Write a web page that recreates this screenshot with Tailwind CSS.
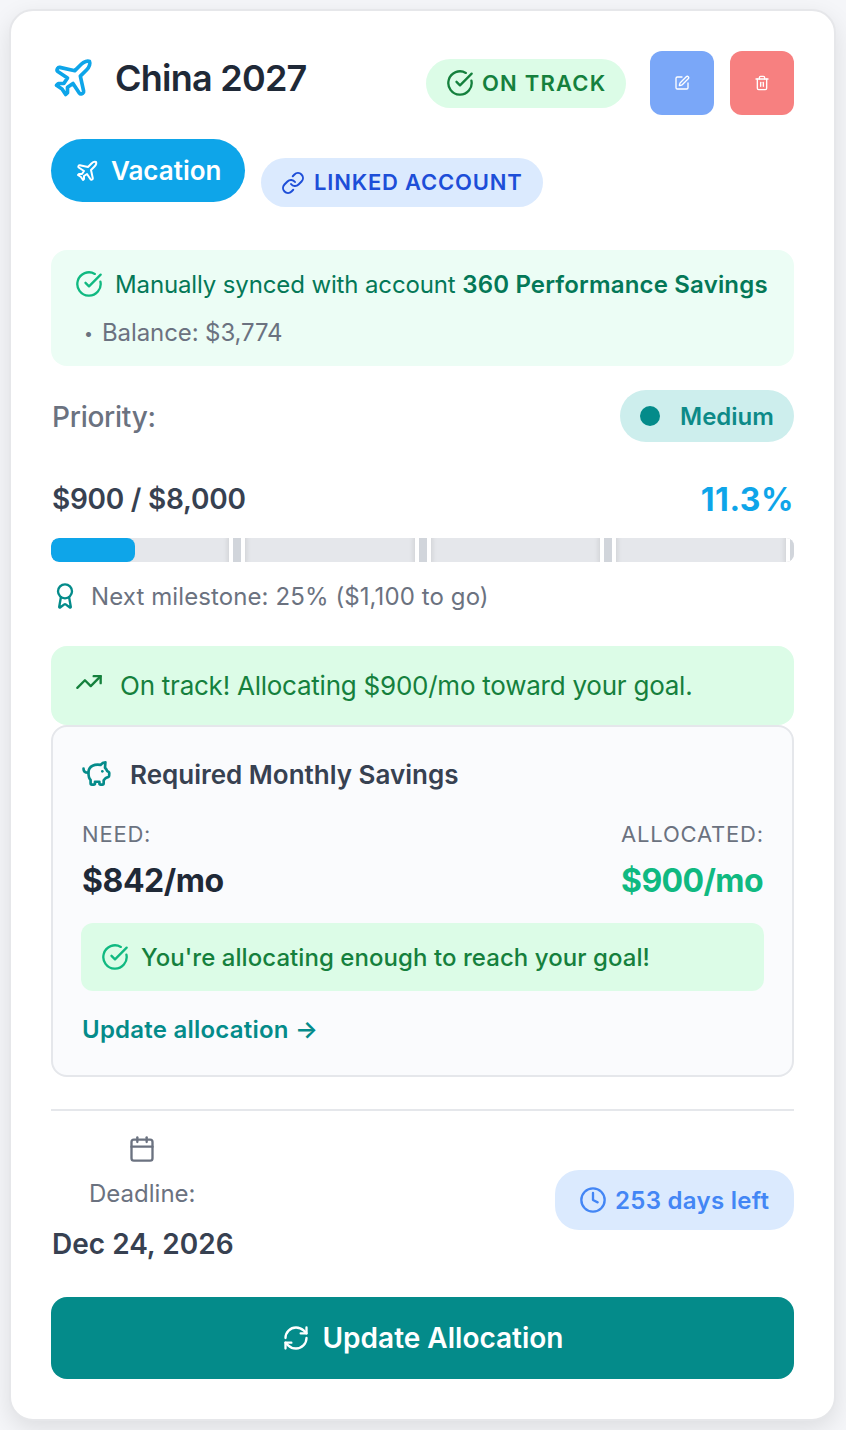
<!DOCTYPE html>
<html lang="en">
<head>
    <meta charset="UTF-8">
    <meta name="viewport" content="width=device-width, initial-scale=1.0">
    <title>Savings Goal</title>
    <script src="https://cdn.jsdelivr.net/npm/@tailwindcss/browser@4"></script>
</head>
<body class="bg-[#f5f6f9] h-[1430px] overflow-hidden p-[9px] font-['Inter','Liberation_Sans',sans-serif] whitespace-nowrap">

<svg class="hidden">
    <symbol id="plane" viewBox="0 0 24 24"><path d="M17.8 19.2 16 11l3.5-3.5C21 6 21.5 4 21 3c-1-.5-3 0-4.5 1.5L13 8 4.8 6.2c-.5-.1-.9.1-1.1.5l-.3.5c-.2.5-.1 1 .3 1.3L9 12l-2 3H4l-1 1 3 2 2 3 1-1v-3l3-2 3.5 5.3c.3.4.8.5 1.3.3l.5-.2c.4-.3.6-.7.5-1.2z"/></symbol>
    <symbol id="check" viewBox="0 0 24 24"><path d="M21.801 10A10 10 0 1 1 17 3.335"/><path d="m9 11 3 3L22 4"/></symbol>
</svg>

<div class="w-[827px] h-[1412px] bg-white rounded-3xl border-2 border-[#e6e7ea] p-10 shadow-[0_8px_24px_rgba(0,0,0,0.1)]">
    <!-- header -->
    <div class="flex h-16">
        <svg class="size-11 mt-[5px] shrink-0 text-[#0ea5e9]" fill="none" stroke="currentColor" stroke-width="2" stroke-linecap="round" stroke-linejoin="round"><use href="#plane"/></svg>
        <h2 class="ml-5 mt-1 text-[36px] leading-[46px] font-semibold text-[#1f2937] tracking-[-0.75px]">China 2027</h2>
        <div class="ml-auto mt-2 h-[49px] w-[200px] pl-5 flex items-center gap-2 rounded-full bg-[#dcfce7] text-[#15803d]">
            <svg class="size-7 -mt-0.5 shrink-0" fill="none" stroke="currentColor" stroke-width="2" stroke-linecap="round" stroke-linejoin="round"><use href="#check"/></svg>
            <span class="text-[22px] font-semibold tracking-[1.2px]">ON TRACK</span>
        </div>
        <button class="ml-6 size-16 rounded-xl bg-[#7aa7f8] text-white flex items-center justify-center">
            <svg class="size-4" viewBox="0 0 24 24" fill="none" stroke="currentColor" stroke-width="2" stroke-linecap="round" stroke-linejoin="round"><path d="M12 3H5a2 2 0 0 0-2 2v14a2 2 0 0 0 2 2h14a2 2 0 0 0 2-2v-7"/><path d="M18.375 2.625a1 1 0 0 1 3 3l-9.013 9.014a2 2 0 0 1-.853.505l-2.873.84a.5.5 0 0 1-.62-.62l.84-2.873a2 2 0 0 1 .506-.852z"/></svg>
        </button>
        <button class="ml-4 size-16 rounded-xl bg-[#f78080] text-white flex items-center justify-center">
            <svg class="size-4" viewBox="0 0 24 24" fill="none" stroke="currentColor" stroke-width="2" stroke-linecap="round" stroke-linejoin="round"><path d="M3 6h18"/><path d="M19 6v14c0 1-1 2-2 2H7c-1 0-2-1-2-2V6"/><path d="M8 6V4c0-1 1-2 2-2h4c1 0 2 1 2 2v2"/><path d="M10 11v6"/><path d="M14 11v6"/></svg>
        </button>
    </div>

    <!-- tags -->
    <div class="mt-6 h-[68px] flex gap-4">
        <div class="h-[63px] w-[194px] pl-6 flex items-center gap-3 rounded-full bg-[#0ea5e9] text-white">
            <svg class="size-6 shrink-0" fill="none" stroke="currentColor" stroke-width="2" stroke-linecap="round" stroke-linejoin="round"><use href="#plane"/></svg>
            <span class="text-[26px] font-semibold">Vacation</span>
        </div>
        <div class="mt-[19px] h-[49px] w-[282px] pl-5 flex items-center gap-[9px] rounded-full bg-[#dbeafe] text-[#1d4ed8]">
            <svg class="size-6 shrink-0" viewBox="0 0 24 24" fill="none" stroke="currentColor" stroke-width="2" stroke-linecap="round" stroke-linejoin="round"><path d="M10 13a5 5 0 0 0 7.54.54l3-3a5 5 0 0 0-7.07-7.07l-1.72 1.71"/><path d="M14 11a5 5 0 0 0-7.54-.54l-3 3a5 5 0 0 0 7.07 7.07l1.71-1.71"/></svg>
            <span class="text-[22px] font-semibold tracking-[0.8px]">LINKED ACCOUNT</span>
        </div>
    </div>

    <!-- linked account -->
    <div class="mt-[43px] h-[116px] rounded-2xl bg-[#ecfdf5] px-6 pt-[15px] text-2xl leading-10">
        <div class="flex items-center gap-3 text-[#047857]">
            <svg class="size-7 -mt-0.5 shrink-0 text-[#10b981]" fill="none" stroke="currentColor" stroke-width="2" stroke-linecap="round" stroke-linejoin="round"><use href="#check"/></svg>
            <span class="tracking-[-0.13px]">Manually synced with account <b class="font-semibold tracking-[0.17px]">360 Performance Savings</b></span>
        </div>
        <div class="mt-2 ml-[9px] flex gap-[9px] text-[#6b7280]"><span class="text-base leading-10">•</span><span class="tracking-[-0.1px]">Balance: $3,774</span></div>
    </div>

    <!-- priority -->
    <div class="mt-6 h-[52px] flex items-center justify-between">
        <span class="ml-px mt-px text-[28px] font-medium tracking-[-0.25px] text-[#6b7280]">Priority:</span>
        <div class="h-[52px] w-[174px] pl-5 flex items-center gap-5 rounded-full bg-[#cdeeed] text-[#0d8a88]">
            <i class="size-5 rounded-full bg-[#048b8a]"></i>
            <span class="mt-0.5 text-2xl font-semibold">Medium</span>
        </div>
    </div>

    <!-- progress -->
    <div class="mt-9 h-[42px] flex items-center justify-between">
        <span class="ml-px text-[28px] font-semibold tracking-[-0.25px] text-[#374151]">$900 / $8,000</span>
        <span class="mt-0.5 text-[32px] font-bold tracking-[0.5px] text-[#0ea5e9]">11.3%</span>
    </div>
    <div class="relative mt-[18px] h-6 rounded-lg bg-[#e5e7eb] overflow-hidden">
        <div class="h-6 rounded-lg bg-[#0ea5e9]" style="width: 11.3%"></div>
        <i class="absolute top-0 h-6 w-2 -ml-1 left-1/4 bg-[#d1d5db] shadow-[0_0_0_4px_white,0_0_6px_4px_rgba(0,0,0,0.14)]"></i>
        <i class="absolute top-0 h-6 w-2 -ml-1 left-2/4 bg-[#d1d5db] shadow-[0_0_0_4px_white,0_0_6px_4px_rgba(0,0,0,0.14)]"></i>
        <i class="absolute top-0 h-6 w-2 -ml-1 left-3/4 bg-[#d1d5db] shadow-[0_0_0_4px_white,0_0_6px_4px_rgba(0,0,0,0.14)]"></i>
        <i class="absolute top-0 h-6 w-2 -ml-1 left-full bg-[#d1d5db] shadow-[0_0_0_4px_white,0_0_6px_4px_rgba(0,0,0,0.14)]"></i>
    </div>
    <div class="mt-4 h-9 flex items-center gap-3 text-2xl text-[#6b7280]">
        <svg class="size-7 shrink-0 text-[#048b8a]" viewBox="0 0 24 24" fill="none" stroke="currentColor" stroke-width="2" stroke-linecap="round" stroke-linejoin="round"><path d="m15.477 12.89 1.515 8.526a.5.5 0 0 1-.81.47l-3.58-2.687a1 1 0 0 0-1.197 0l-3.586 2.686a.5.5 0 0 1-.81-.469l1.514-8.526"/><circle cx="12" cy="8" r="6"/></svg>
        <span class="mt-0.5 tracking-[0.1px]">Next milestone: 25% ($1,100 to go)</span>
    </div>

    <!-- status -->
    <div class="mt-8 h-[79px] px-6 flex items-center gap-[17px] rounded-2xl bg-[#dcfce7] text-[#15803d] text-[26px]">
        <svg class="size-7 -mt-2 shrink-0" viewBox="0 0 24 24" fill="none" stroke="currentColor" stroke-width="2" stroke-linecap="round" stroke-linejoin="round"><path d="M16 7h6v6"/><path d="m22 7-8.5 8.5-5-5L2 17"/></svg>
        <span class="tracking-[-0.24px]">On track! Allocating $900/mo toward your goal.</span>
    </div>

    <!-- monthly savings -->
    <div class="h-[352px] rounded-2xl border-2 border-[#e5e7eb] bg-[#fafbfd] px-7 pt-[27px]">
        <div class="h-10 flex items-center gap-[17px] text-[26px] font-semibold text-[#374151]">
            <svg class="size-8 shrink-0 text-[#048b8a]" viewBox="0 0 24 24" fill="none" stroke="currentColor" stroke-width="2" stroke-linecap="round" stroke-linejoin="round"><path d="M18.3 3.3c-1.4 0-2.8.8-3.6 1.9-3.9-.6-9.1.2-9.1 5.8 0 2.4.3 4.2 1.6 5.5V19a1 1 0 0 0 1 1h1.3a1 1 0 0 0 1-1v-1.2h3.3V19a1 1 0 0 0 1 1h1.2a1 1 0 0 0 1-1v-2.2c.6-.8 1.1-1.6 2-2l1.5-.6a1 1 0 0 0 .6-.9l.1-2a1 1 0 0 0-.5-.9l-1-.6c-.6-1.2-1-1.8-1.7-2.5z"/><path d="M16 10h.01"/><path d="M1.9 8c0 1.800 1.200 3 3.400 3"/></svg>
            <span>Required Monthly Savings</span>
        </div>
        <div class="mt-[22px] ml-px flex justify-between">
            <div>
                <div class="text-[22px] leading-9 tracking-[0.8px] text-[#6b7280]">NEED:</div>
                <div class="mt-1 text-[32px] leading-[50px] font-bold tracking-[-0.45px] text-[#1f2937]">$842/mo</div>
            </div>
            <div class="mr-px">
                <div class="-mr-px text-[22px] leading-9 tracking-[0.8px] text-[#6b7280]">ALLOCATED:</div>
                <div class="mt-1 text-[32px] leading-[50px] font-bold tracking-[-0.6px] text-[#10b981]">$900/mo</div>
            </div>
        </div>
        <div class="mt-[17px] h-[68px] px-5 flex items-center gap-3 rounded-xl bg-[#dcfce7] text-[#15803d] text-2xl font-medium">
            <svg class="size-7 shrink-0 text-[#10b981]" fill="none" stroke="currentColor" stroke-width="2" stroke-linecap="round" stroke-linejoin="round"><use href="#check"/></svg>
            <span class="mt-0.5 tracking-[0.06px]">You're allocating enough to reach your goal!</span>
        </div>
        <a class="mt-5 ml-px block text-2xl leading-[38px] font-semibold tracking-[0.22px] text-[#048b8a]">Update allocation →</a>
    </div>

    <!-- deadline -->
    <div class="mt-8 border-t-2 border-[#e5e7eb] h-[156px] pt-6 flex items-start justify-between">
        <div class="flex flex-col items-center text-[#6b7280]">
            <svg class="size-7" viewBox="0 0 24 24" fill="none" stroke="currentColor" stroke-width="2" stroke-linecap="round" stroke-linejoin="round"><path d="M8 2v4"/><path d="M16 2v4"/><rect width="18" height="18" x="3" y="4" rx="2"/><path d="M3 10h18"/></svg>
            <span class="mt-[13px] text-2xl leading-9">Deadline:</span>
            <span class="ml-px mt-[9px] text-[28px] leading-[46px] font-semibold text-[#374151]">Dec 24, 2026</span>
        </div>
        <div class="mt-[35px] h-[60px] w-[239px] pl-6 flex items-center gap-2 rounded-3xl bg-[#dbeafe] text-[#4386f5]">
            <svg class="size-7 shrink-0" viewBox="0 0 24 24" fill="none" stroke="currentColor" stroke-width="2" stroke-linecap="round" stroke-linejoin="round"><circle cx="12" cy="12" r="10"/><path d="M12 6v6l4 2"/></svg>
            <span class="mt-0.5 text-2xl font-semibold tracking-[0.3px]">253 days left</span>
        </div>
    </div>

    <button class="mt-8 h-[82px] w-full rounded-2xl bg-[#048b8a] text-white text-[28px] font-semibold flex items-center justify-center gap-[13px]">
        <svg class="size-7" viewBox="0 0 24 24" fill="none" stroke="currentColor" stroke-width="2" stroke-linecap="round" stroke-linejoin="round"><path d="M3 12a9 9 0 0 1 9-9 9.75 9.75 0 0 1 6.74 2.74L21 8"/><path d="M21 3v5h-5"/><path d="M21 12a9 9 0 0 1-9 9 9.75 9.75 0 0 1-6.74-2.74L3 16"/><path d="M8 16H3v5"/></svg>
        <span>Update Allocation</span>
    </button>
</div>

</body>
</html>
